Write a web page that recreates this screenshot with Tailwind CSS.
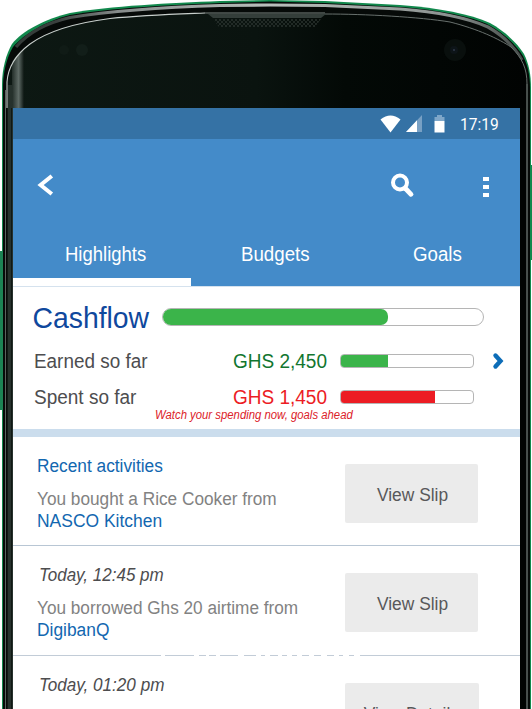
<!DOCTYPE html>
<html lang="en">
<head>
<meta charset="utf-8">
<title>Cashflow</title>
<script src="https://cdn.jsdelivr.net/npm/@tailwindcss/browser@4"></script>
</head>
<body class="bg-white">
<div class="relative w-[532px] h-[709px] overflow-hidden font-['Liberation_Sans',Arial,sans-serif]">
  <!-- phone body -->
  <svg class="absolute inset-0" width="532" height="709" viewBox="0 0 532 709" fill="none">
    <defs>
      <linearGradient id="face" x1="0" x2="1"><stop offset="0" stop-color="#0d1813"/><stop offset=".48" stop-color="#0a130f"/><stop offset=".65" stop-color="#030906"/><stop offset="1" stop-color="#010302"/></linearGradient>
      <linearGradient id="shine" x1="0" x2="1"><stop offset="0" stop-color="#26312c"/><stop offset=".55" stop-color="#6d7974"/><stop offset="1" stop-color="#0d1612"/></linearGradient>
      <linearGradient id="rim" x1="0" x2="1"><stop offset="0" stop-color="#343a38"/><stop offset=".08" stop-color="#3a403e"/><stop offset=".2" stop-color="#868b8a"/><stop offset=".5" stop-color="#b9bfbc"/><stop offset=".85" stop-color="#8d9391"/><stop offset="1" stop-color="#454b49"/></linearGradient>
      <pattern id="mesh" width="4" height="4" patternUnits="userSpaceOnUse"><path d="M0 0L4 4M4 0L0 4" stroke="#2c3531" stroke-width=".7"/></pattern>
    </defs>
    <path d="M2 709V84C2 70 6 54 12 44C22 31 45 19 70 13C110 6 170 3 220 1L270 0L325 1L400 5C440 8 470 14 490 23C506 32 518 44 524 54C529 64 531 75 531 88V709Z" fill="#12894d"/>
    <path d="M0 251H3V410H0Z" fill="#1b8354"/>
    <path d="M531 165H532V260H531Z" fill="#12894d"/>
    <path d="M3 709V86C3 72 7 57 13 47C24 34 46 21 70 15C110 8 170 5 220 3L270 1.500L325 3L400 7C440 10 470 16 489 25C505 34 517 46 523 56C528 66 530 76 530 88V709Z" fill="#060a08"/>
    <path d="M16 47C27 34 46 23 70 17.500C110 11 170 7 220 5.500L270 5L325 5.500L400 9C440 12 470 19 488 27C504 36 515 48 522 60" stroke="url(#rim)" stroke-width="3.200"/>
    <path d="M7 709V82C8 66 18 53 30 44C48 31 75 23 110 18.500C145 15 180 14 205 13.500H325C365 14 420 17 450 22C478 29 499 39 511 47C522 58 527 68 527 84V709Z" fill="url(#face)"/>
    <path d="M12 62Q17 54 24 49V108H12Z" fill="url(#shine)" opacity=".85"/>
    <path d="M7 108V82C8 66 18 53 30 44C48 31 75 23 110 18.500C145 15 180 14 205 13" stroke="#c8cfcc" stroke-width="1.100"/>
    <path d="M205 13H325" stroke="#7b8480" stroke-width="1.200"/>
    <path d="M325 14C365 14 420 17 450 22C478 29 499 39 511 47C522 58 527 68 527 84" stroke="#68706d" stroke-width="1"/>
    <path d="M208 14H326L321 18H213Z" fill="#343e3a"/>
    <path d="M213 19H321L315 27H219Z" fill="url(#mesh)"/>
    <circle cx="82" cy="50" r="6" fill="#121e19"/><circle cx="64" cy="50" r="5" fill="#101b16"/>
    <circle cx="455" cy="50" r="11" fill="#090f0d"/><circle cx="454" cy="50" r="4" fill="#0d1418"/><circle cx="454" cy="50" r="1" fill="#30394a"/>
    <path d="M8 85H12V108H8Z" fill="#26312c"/>
    <path d="M7 108H13V709H7Z" fill="#26312c"/><path d="M7.500 108V709M11.500 108V709" stroke="#101814"/>
    <path d="M5.500 90V709" stroke="#5b625f"/>
    <path d="M520 108H526V709H520Z" fill="#010402"/>
    <path d="M527 84V709" stroke="#5f6864" stroke-width="1.500"/>
  </svg>

  <!-- screen -->
  <main class="relative ml-[13px] mt-[108px] w-[507px] h-[601px] bg-white flex flex-col overflow-hidden">
    <div class="h-[31px] shrink-0 bg-[#3572a5] flex items-center justify-end pr-[21px]">
      <svg class="mr-[5px]" width="21" height="18" viewBox="0 0 21 18"><path d="M.500 4.500Q10.500-3.500 20.500 4.500L10.500 17.500Z" fill="#fff"/></svg>
      <svg class="mr-[12px]" width="16" height="17" viewBox="0 0 16 17"><path d="M16 0V17H0Z" fill="#78a0c4"/><path d="M11 5.300V17H0Z" fill="#fff"/></svg>
      <svg class="mr-[15px]" width="11" height="18" viewBox="0 0 11 18"><path d="M3 0H8V2H10.500V6H.500V2H3Z" fill="#7fa7c9"/><path d="M.500 6H10.500V17.500H.500Z" fill="#fff"/></svg>
      <span class="w-[39px] font-['Roboto',sans-serif] text-[16.500px] leading-[20px] text-white whitespace-nowrap origin-left scale-x-[.94] translate-y-[1px]">17:19</span>
    </div>
    <header class="h-[147px] shrink-0 bg-[#448bc9] flex flex-col">
      <div class="h-[92px] flex items-center pl-[24px] pr-[31px]">
        <svg width="18" height="22" viewBox="0 0 18 22"><path d="M14.800 2L3.600 11L14.800 20" fill="none" stroke="#fff" stroke-width="4"/></svg>
        <svg class="ml-auto mr-[68px]" width="25" height="25" viewBox="0 0 25 25" fill="none" stroke="#fff"><circle cx="10" cy="9.500" r="7" stroke-width="4"/><path d="M15.500 15.500L21 21.300" stroke-width="4.800" stroke-linecap="round"/></svg>
        <div class="flex flex-col gap-[4px] w-[6px] mt-[3px]"><i class="h-[4px] bg-white"></i><i class="h-[4px] bg-white"></i><i class="h-[4px] bg-white"></i></div>
      </div>
      <nav class="h-[47px] flex text-[20px] leading-[47px] text-white whitespace-nowrap">
        <span class="w-[176px] pl-[52px]"><b class="inline-block font-normal origin-left scale-x-[.925]">Highlights</b></span>
        <span class="w-[172px] pl-[52px]"><b class="inline-block font-normal origin-left scale-x-[.935]">Budgets</b></span>
        <span class="pl-[52px]"><b class="inline-block font-normal origin-left scale-x-[.935]">Goals</b></span>
      </nav>
      <div class="mt-auto w-[178px] h-[8px] bg-white"></div>
    </header>
    <section class="h-[143px] shrink-0 border-t border-[#d5e2ee] pl-[20px] whitespace-nowrap text-[20px] text-[#4d4d4f]">
      <div class="h-[56px] pt-[3px] flex items-center">
        <h1 class="w-[129px] text-[30px] leading-[36px] text-[#0f489d] origin-left scale-x-[.945] -translate-x-[.5px] mt-[3px]">Cashflow</h1>
        <div class="w-[322px] h-[18px] border border-[#b5b5b5] rounded-[9px] overflow-hidden"><div class="w-[225px] h-full bg-[#3bb44a] rounded-r-[7px]"></div></div>
      </div>
      <div class="h-[36px] flex items-center">
        <span class="w-[200px] pl-[.7px]"><b class="inline-block font-normal origin-left scale-x-[.945]">Earned so far</b></span>
        <span class="w-[107px] text-[#12762f]"><b class="inline-block font-normal origin-left scale-x-[.95]">GHS 2,450</b></span>
        <div class="w-[134px] h-[14px] border border-[#b5b5b5] rounded-[4px] overflow-hidden"><div class="w-[47px] h-full bg-[#3bb44a]"></div></div>
        <svg class="ml-[17px]" width="13" height="18" viewBox="0 0 13 18"><path d="M4.500 3.500L9.500 9L4.500 14.500" fill="none" stroke="#0d6db8" stroke-width="4.400" stroke-linecap="round"/></svg>
      </div>
      <div class="h-[36px] flex items-center">
        <span class="w-[200px] pl-[.7px]"><b class="inline-block font-normal origin-left scale-x-[.95]">Spent so far</b></span>
        <span class="w-[107px] text-[#ec1c24]"><b class="inline-block font-normal origin-left scale-x-[.95]">GHS 1,450</b></span>
        <div class="w-[134px] h-[14px] border border-[#b5b5b5] rounded-[4px] overflow-hidden"><div class="w-[94px] h-full bg-[#ec1c24]"></div></div>
      </div>
      <p class="ml-[122px] -mt-[7px] text-[12px] leading-[14px] italic text-[#dc2229]"><span class="inline-block origin-left scale-x-[.945]">Watch your spending now, goals ahead</span></p>
    </section>
    <div class="h-[8px] shrink-0 bg-[#cbdded]"></div>

    <article class="h-[109px] shrink-0 border-b border-[#b8c6d4] flex pl-[24px] text-[18px] leading-[22px] whitespace-nowrap">
      <div class="w-[308px] pt-[18px]">
        <h2 class="text-[#1267b0] origin-left scale-x-[.96]">Recent activities</h2>
        <p class="mt-[11px] text-[#828282] origin-left scale-x-[.957]">You bought a Rice Cooker from</p>
        <p class="text-[#1267b0] origin-left scale-x-[.97]">NASCO Kitchen</p>
      </div>
      <button class="mt-[27px] w-[133px] h-[59px] rounded-[2px] bg-[#ebebeb] text-[#58585a]"><span class="inline-block scale-x-[.965] translate-x-[.7px] translate-y-[1px]">View Slip</span></button>
    </article>

    <article class="h-[109px] shrink-0 flex pl-[24px] text-[18px] leading-[22px] whitespace-nowrap">
      <div class="w-[308px] pt-[18px]">
        <h2 class="pl-[2px] italic text-[#4d4d4f] origin-left scale-x-[.945]">Today, 12:45 pm</h2>
        <p class="mt-[11px] text-[#828282] origin-left scale-x-[.955]">You borrowed Ghs 20 airtime from</p>
        <p class="text-[#1267b0] origin-left scale-x-[.965]">DigibanQ</p>
      </div>
      <button class="mt-[27px] w-[133px] h-[59px] rounded-[2px] bg-[#ebebeb] text-[#58585a]"><span class="inline-block scale-x-[.965] translate-x-[.7px] translate-y-[1px]">View Slip</span></button>
    </article>
    <svg class="shrink-0 block" width="507" height="1"><path d="M0 .500H148M152 .500H181M186 .500H193M196 .500H203M207 .500H225M231 .500H243M248 .500H252M257 .500H265M269 .500H274M279 .500H284M289 .500H296M301 .500H308M314 .500H321M326 .500H330M336 .500H341M347 .500H507" stroke="#c2ccd7"/></svg>
    <article class="h-[109px] shrink-0 flex pl-[24px] text-[18px] leading-[22px] whitespace-nowrap">
      <div class="w-[308px] pt-[18px]">
        <h2 class="pl-[2px] italic text-[#4d4d4f] origin-left scale-x-[.95]">Today, 01:20 pm</h2>
      </div>
      <button class="mt-[27px] w-[134px] h-[59px] rounded-[2px] bg-[#ebebeb] text-[#58585a]"><span class="inline-block scale-x-[.965] -translate-x-[1px] translate-y-[1px]">View Details</span></button>
    </article>
  </main>
</div>
</body>
</html>
